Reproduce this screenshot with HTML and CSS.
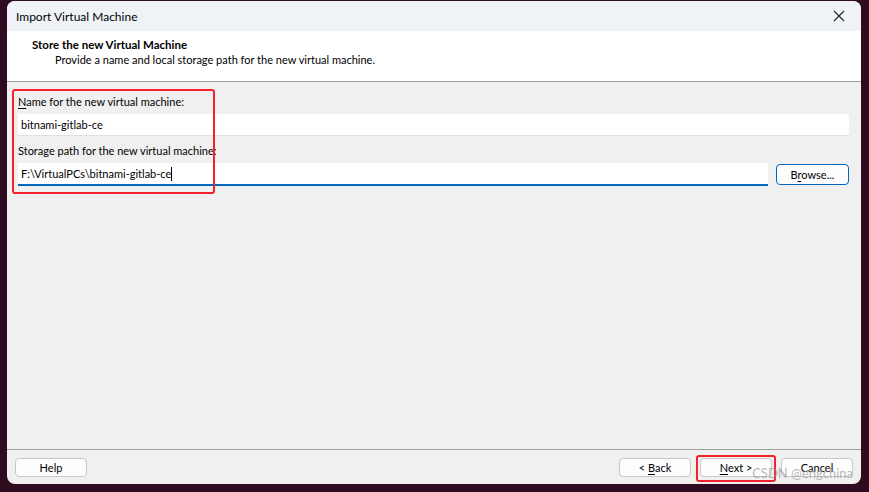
FILE: index.html
```html
<!DOCTYPE html>
<html>
<head>
    <meta charset="UTF-8">
    <title>Import Virtual Machine</title>
    <link rel="stylesheet" href="styles.css">
</head>
<body>
    <div class="dialog">
        <div class="titlebar">
            <span class="title">Import Virtual Machine</span>
            <span class="close">
                <svg width="12" height="12" viewBox="0 0 12 12"><path d="M1 1 L11 11 M11 1 L1 11" stroke="#222" stroke-width="1.1"/></svg>
            </span>
        </div>

        <!-- wizard header -->
        <div class="header">
            <div class="head-title">Store the new Virtual Machine</div>
            <div class="head-sub">Provide a name and local storage path for the new virtual machine.</div>
        </div>

        <div class="body">
            <div class="highlight hl-fields"></div>
            <label class="label"><u>N</u>ame for the new virtual machine:</label>
            <div class="input">bitnami-gitlab-ce</div>
            <label class="label">Storage path for the new virtual machine:</label>
            <div class="row">
                <div class="input focus">F:\VirtualPCs\bitnami-gitlab-ce<span class="caret"></span></div>
                <button class="btn browse">B<u>r</u>owse...</button>
            </div>
        </div>

        <div class="footer">
            <button class="btn">Help</button>
            <div class="spacer"></div>
            <button class="btn">&lt; <u>B</u>ack</button>
            <button class="btn next"><u>N</u>ext &gt;<span class="highlight hl-next"></span></button>
            <button class="btn">Cancel</button>
            <span class="watermark">CSDN @engchina</span>
        </div>
    </div>
</body>
</html>
```

FILE: styles.css
```css
body {
    margin: 0;
    background: #2e0b1f;
    font-family: 'Lato', 'Noto Sans', sans-serif;
    font-size: 11px;
    color: #000;
}
.dialog {
    position: relative;
    margin: 1px 0 0 7px;
    width: 854px;
    height: 483px;
    background: #f0f0f0;
    border-radius: 8px;
    overflow: hidden;
    display: flex;
    flex-direction: column;
}
.titlebar {
    height: 30px;
    background: #eff3f8;
    display: flex;
    align-items: center;
    padding: 0 0 0 9px;
}
.title {
    flex: 1;
    font-size: 12px;
}
.close {
    width: 20px;
    margin-right: 12px;
    display: flex;
    justify-content: center;
}
.header {
    background: #fff;
    height: 51px;
    border-bottom: 1px solid #a0a0a0;
    padding-left: 25px;
    box-sizing: border-box;
}
.head-title {
    font-weight: bold;
    font-size: 11.5px;
    margin-top: 7px;
}
.head-sub {
    margin-left: 23px;
    margin-top: 2px;
}
.body {
    position: relative;
    flex: 1;
    padding: 12px 12px 0 11px;
    border-bottom: 1px solid #a0a0a0;
}
.label {
    display: block;
    height: 20px;
    line-height: 16px;
}
.label u, .btn u {
    text-decoration-thickness: 1px;
    text-underline-offset: 2px;
}
.input {
    background: #fff;
    height: 21px;
    line-height: 21px;
    padding-left: 3px;
    margin-bottom: 7px;
    border-bottom: 1px solid #e0e0e0;
}
.input.focus {
    flex: 1;
    border-bottom: 2px solid #0067c0;
    margin-bottom: 0;
}
.caret {
    display: inline-block;
    width: 1px;
    height: 14px;
    background: #000;
    vertical-align: -3px;
}
.row {
    display: flex;
    align-items: center;
    gap: 8px;
}
.btn {
    font-family: inherit;
    font-size: 11px;
    width: 72px;
    height: 19px;
    padding: 0;
    background: #fdfdfd;
    border: 1px solid #c8c8c8;
    border-radius: 4px;
    color: #000;
    position: relative;
}
.browse {
    width: 73px;
    height: 21px;
    border-color: #0067c0;
}
.footer {
    height: 34px;
    display: flex;
    align-items: center;
    padding: 0 8px 0 8px;
    gap: 9px;
    position: relative;
}
.spacer {
    flex: 1;
}
.highlight {
    position: absolute;
    border: 2px solid #f5222d;
    border-radius: 3px;
    pointer-events: none;
}
.hl-fields {
    left: 5px;
    top: 7px;
    width: 199px;
    height: 101px;
}
.hl-next {
    left: -5px;
    top: -4px;
    width: 76px;
    height: 23px;
}
.watermark {
    position: absolute;
    right: 8px;
    bottom: 3px;
    font-size: 13px;
    color: rgba(150, 150, 150, 0.7);
    pointer-events: none;
}
```
